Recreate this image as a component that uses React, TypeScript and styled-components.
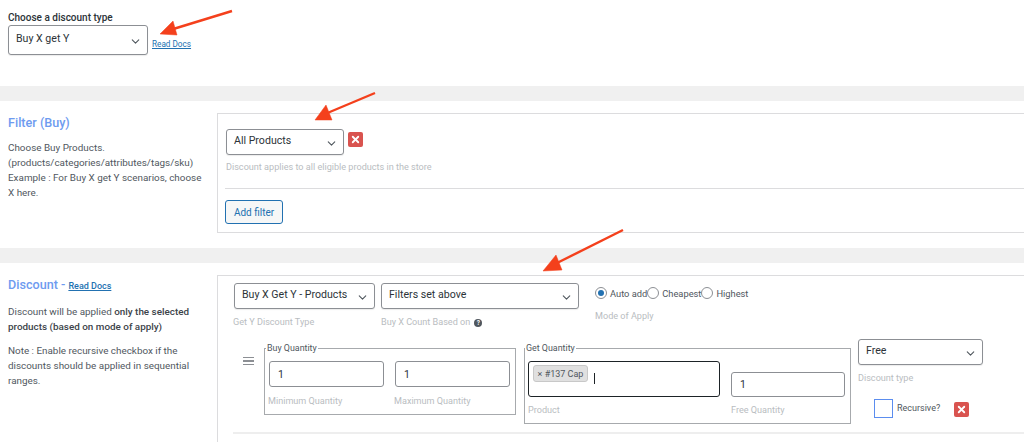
import React from 'react'
import styled, { createGlobalStyle } from 'styled-components'
import { ChevronDown, X } from 'lucide-react'

const GlobalStyle = createGlobalStyle`
  html, body {
    margin: 0;
    padding: 0;
    background: #fff;
    font-family: Roboto, "Liberation Sans", sans-serif;
    color: #50575e;
  }
  * { box-sizing: border-box; }
`

const Page = styled.div`
  position: relative;
  width: 1024px;
  height: 442px;
  overflow: hidden;
`

const TopSection = styled.div`
  height: 86px;
  padding: 12px 0 0 8px;
`

const TypeLabel = styled.div`
  font-size: 10px;
  line-height: 12px;
  font-weight: 500;
  color: #2c3338;
  margin-bottom: 1px;
`

const Row = styled.div<{ $gap?: number }>`
  display: flex;
  align-items: flex-start;
  gap: ${(p) => p.$gap ?? 0}px;
`

const Bar = styled.div`
  height: 15px;
  background: #f0f0f0;
`

const Section = styled.div<{ $height: number }>`
  display: flex;
  height: ${(p) => p.$height}px;
  padding-top: 12px;
`

const Side = styled.div`
  width: 217px;
  flex: none;
  padding: 0 12px 0 8px;
  font-size: 9.9px;
  line-height: 15px;
  color: #50575e;

  p {
    margin: 0 0 9px;
  }
  b {
    font-weight: 500;
    color: #3c434a;
  }
`

const Title = styled.h2<{ $mb: number }>`
  margin: 0 0 ${(p) => p.$mb}px;
  font-size: 12.6px;
  line-height: 20px;
  font-weight: 500;
  color: #6e9bf0;
`

const DocsLink = styled.a<{ $bold?: boolean }>`
  color: #2271b1;
  font-size: ${(p) => (p.$bold ? 9 : 8.2)}px;
  font-weight: ${(p) => (p.$bold ? 500 : 400)};
  text-decoration: underline;
`

const Panel = styled.div<{ $height: number; $pad: string }>`
  width: 840px;
  height: ${(p) => p.$height}px;
  flex: none;
  border: 1px solid #dcdcde;
  padding: ${(p) => p.$pad};
`

const SelectBox = styled.div<{ $w: number; $h: number }>`
  width: ${(p) => p.$w}px;
  height: ${(p) => p.$h}px;
  flex: none;
  display: flex;
  align-items: center;
  justify-content: space-between;
  padding: 0 5px 3px 7px;
  background: #fff;
  border: 1px solid #8c8f94;
  border-radius: 3px;
  font-size: 10.6px;
  color: #2c3338;
  box-shadow: 0 1px 1px rgba(0, 0, 0, 0.08);

  svg {
    width: 13px;
    height: 13px;
    color: #50575e;
    margin-top: 5px;
  }
`

const Select = ({ w, h, value }: { w: number; h: number; value: string }) => (
  <SelectBox $w={w} $h={h}>
    <span>{value}</span>
    <ChevronDown strokeWidth={2} />
  </SelectBox>
)

const DocsWrap = styled.div`
  margin: 11px 0 0 4px;
  line-height: 12px;
`

const RemoveBtn = styled.span<{ $mt: number }>`
  width: 15px;
  height: 15px;
  flex: none;
  margin-top: ${(p) => p.$mt}px;
  display: flex;
  align-items: center;
  justify-content: center;
  background: #d9534f;
  border-radius: 2px;
  color: #fff;

  svg {
    width: 11px;
    height: 11px;
  }
`

const Hint = styled.div<{ $mt?: number; $ml?: number }>`
  font-size: 9.1px;
  line-height: 11px;
  color: #b9bdc1;
  margin-top: ${(p) => p.$mt ?? 0}px;
  margin-left: ${(p) => p.$ml ?? 0}px;
  white-space: nowrap;
  display: flex;
  align-items: center;
  gap: 4px;
`

const Divider = styled.div`
  height: 1px;
  background: #dcdcde;
  margin: 15px 0 11px -1px;
`

const AddFilter = styled.button`
  display: block;
  width: 58px;
  height: 24px;
  margin-left: -1px;
  padding: 0;
  background: #f6f7f7;
  border: 1px solid #2271b1;
  border-radius: 3px;
  color: #2271b1;
  font-family: inherit;
  font-size: 10px;
`

const Col = styled.div<{ $w?: number; $ml?: number; $mt?: number }>`
  ${(p) => (p.$w ? `width: ${p.$w}px;` : '')}
  ${(p) => (p.$ml ? `margin-left: ${p.$ml}px;` : '')}
  ${(p) => (p.$mt ? `margin-top: ${p.$mt}px;` : '')}
  flex: none;
`

const Radios = styled.div`
  display: flex;
  align-items: center;
  height: 12px;
  margin-top: 4px;
`

const RadioDot = styled.span<{ $on?: boolean }>`
  width: 12px;
  height: 12px;
  flex: none;
  border: 1px solid #8c8f94;
  border-radius: 50%;
  background: #fff;
  display: flex;
  align-items: center;
  justify-content: center;

  &::after {
    content: '';
    width: 6px;
    height: 6px;
    border-radius: 50%;
    background: ${(p) => (p.$on ? '#2271b1' : 'transparent')};
  }
`

const RadioText = styled.span`
  font-size: 9.3px;
  color: #50575e;
  margin-left: 3px;
  white-space: nowrap;
`

const RuleRow = styled.div`
  display: flex;
  align-items: flex-start;
  margin-top: 15px;
`

const Drag = styled.div`
  width: 11px;
  margin: 14px 10px 0 9px;
  flex: none;
  display: flex;
  flex-direction: column;
  gap: 2px;

  i {
    display: block;
    height: 1.3px;
    background: #8c8f94;
  }
`

const Group = styled.fieldset<{ $w: number; $h: number; $pl: number }>`
  width: ${(p) => p.$w}px;
  height: ${(p) => p.$h}px;
  flex: none;
  margin: 0;
  padding: 0 4px 0 ${(p) => p.$pl}px;
  border: 1px solid #a7aaad;

  legend {
    padding: 0 1px;
    margin-left: -3px;
    font-size: 8.9px;
    line-height: 11px;
    color: #50575e;
  }
`

const Inputs = styled.div`
  display: flex;
  align-items: flex-start;
  margin-top: 7px;
`

const NumberBox = styled.div<{ $w: number; $h?: number; $mt?: number }>`
  width: ${(p) => p.$w}px;
  height: ${(p) => p.$h ?? 26}px;
  margin-top: ${(p) => p.$mt ?? 0}px;
  display: flex;
  align-items: center;
  padding-left: 8px;
  background: #fff;
  border: 1px solid #8c8f94;
  border-radius: 3px;
  font-size: 10.5px;
  color: #2c3338;
`

const ProductBox = styled.div`
  width: 192px;
  height: 36px;
  display: flex;
  align-items: flex-start;
  padding: 3px 4px;
  border: 1px solid #1d2327;
  border-radius: 3px;
`

const Tag = styled.span`
  height: 17px;
  width: 55px;
  display: flex;
  align-items: center;
  justify-content: center;
  gap: 2px;
  background: #e0e0e0;
  border: 1px solid #c8c8c8;
  border-radius: 3px;
  font-size: 9px;
  color: #50575e;
`

const Caret = styled.span`
  width: 1px;
  height: 11px;
  margin: 8px 0 0 6px;
  background: #1d2327;
`

const HelpDot = styled.span`
  width: 8px;
  height: 8px;
  border-radius: 50%;
  background: #50575e;
  color: #fff;
  font-size: 6.5px;
  font-weight: 700;
  line-height: 8px;
  text-align: center;
`

const RecursiveRow = styled.div`
  display: flex;
  align-items: flex-start;
  margin: 15px 0 0 16px;
`

const Check = styled.span`
  width: 19px;
  height: 19px;
  flex: none;
  border: 1px solid #5b8def;
  background: #fff;
`

const RecursiveText = styled.span`
  font-size: 9px;
  line-height: 11px;
  color: #50575e;
  margin: 4px 14px 0 4px;
  white-space: nowrap;
`

const RuleLine = styled.div`
  height: 2px;
  background: #eeeeee;
  margin: 8px 0 0 -1px;
`

const ArrowLayer = styled.svg`
  position: absolute;
  inset: 0;
  pointer-events: none;
`

export default function App() {
  return (
    <Page>
      <GlobalStyle />
      <TopSection>
        <TypeLabel>Choose a discount type</TypeLabel>
        <Row>
          <Select w={140} h={30} value="Buy X get Y" />
          <DocsWrap>
            <DocsLink>Read Docs</DocsLink>
          </DocsWrap>
        </Row>
      </TopSection>
      <Bar />
      <Section $height={147}>
        <Side>
          <Title $mb={7}>Filter (Buy)</Title>
          Choose Buy Products.
          <br />
          (products/categories/attributes/tags/sku)
          <br />
          Example : For Buy X get Y scenarios, choose X here.
        </Side>
        <Panel $height={120} $pad="15px 8px 0">
          <Row $gap={4}>
            <Select w={118} h={26} value="All Products" />
            <RemoveBtn $mt={3}>
              <X strokeWidth={4} />
            </RemoveBtn>
          </Row>
          <Hint $mt={7}>Discount applies to all eligible products in the store</Hint>
          <Divider />
          <AddFilter>Add filter</AddFilter>
        </Panel>
      </Section>
      <Bar />
      <Section $height={179}>
        <Side>
          <Title $mb={8}>
            Discount - <DocsLink $bold>Read Docs</DocsLink>
          </Title>
          <p>
            Discount will be applied <b>only the selected products (based on mode of apply)</b>
          </p>
          <p>Note : Enable recursive checkbox if the discounts should be applied in sequential ranges.</p>
        </Side>
        <Panel $height={200} $pad="7px 0 0 16px">
          <Row>
            <Col>
              <Select w={141} h={26} value="Buy X Get Y - Products" />
              <Hint $mt={8} $ml={-1}>Get Y Discount Type</Hint>
            </Col>
            <Col $ml={6}>
              <Select w={198} h={26} value="Filters set above" />
              <Hint $mt={8}>
                Buy X Count Based on <HelpDot>?</HelpDot>
              </Hint>
            </Col>
            <Col $ml={16}>
              <Radios>
                <RadioDot $on />
                <RadioText>Auto add</RadioText>
                <RadioDot />
                <RadioText>Cheapest</RadioText>
                <RadioDot />
                <RadioText>Highest</RadioText>
              </Radios>
              <Hint $mt={12}>Mode of Apply</Hint>
            </Col>
          </Row>
          <RuleRow>
            <Drag>
              <i />
              <i />
              <i />
            </Drag>
            <Group $w={252} $h={72} $pl={4}>
              <legend>Buy Quantity</legend>
              <Inputs>
                <Col $w={115}>
                  <NumberBox $w={115}>1</NumberBox>
                  <Hint $mt={9} $ml={-1}>Minimum Quantity</Hint>
                </Col>
                <Col $w={115} $ml={11}>
                  <NumberBox $w={115}>1</NumberBox>
                  <Hint $mt={9} $ml={-1}>Maximum Quantity</Hint>
                </Col>
              </Inputs>
            </Group>
            <Col $ml={8}>
              <Group $w={327} $h={81} $pl={3}>
                <legend>Get Quantity</legend>
                <Inputs>
                  <Col $w={192}>
                    <ProductBox>
                      <Tag>× #137 Cap</Tag>
                      <Caret />
                    </ProductBox>
                    <Hint $mt={8}>Product</Hint>
                  </Col>
                  <Col $w={114} $ml={11}>
                    <NumberBox $w={114} $h={25} $mt={11}>
                      1
                    </NumberBox>
                    <Hint $mt={8}>Free Quantity</Hint>
                  </Col>
                </Inputs>
              </Group>
            </Col>
            <Col $ml={7} $mt={-4}>
              <Select w={125} h={26} value="Free" />
              <Hint $mt={8}>Discount type</Hint>
              <RecursiveRow>
                <Check />
                <RecursiveText>Recursive?</RecursiveText>
                <RemoveBtn $mt={3}>
                  <X strokeWidth={4} />
                </RemoveBtn>
              </RecursiveRow>
            </Col>
          </RuleRow>
          <RuleLine />
        </Panel>
      </Section>
      <ArrowLayer width="1024" height="442" viewBox="0 0 1024 442">
        <g fill="#f4401c" stroke="#f4401c">
          <path d="M232 11 L170 30" strokeWidth="2.4" fill="none" />
          <path d="M160 34 L173 21 L177 35 Z" strokeWidth="0.5" />
          <path d="M375 93 L325 114" strokeWidth="2.4" fill="none" />
          <path d="M315 120 L326 105 L332 120 Z" strokeWidth="0.5" />
          <path d="M623 230 L553 265" strokeWidth="2.4" fill="none" />
          <path d="M543 271 L556 255 L562 270 Z" strokeWidth="0.5" />
        </g>
      </ArrowLayer>
    </Page>
  )
}
